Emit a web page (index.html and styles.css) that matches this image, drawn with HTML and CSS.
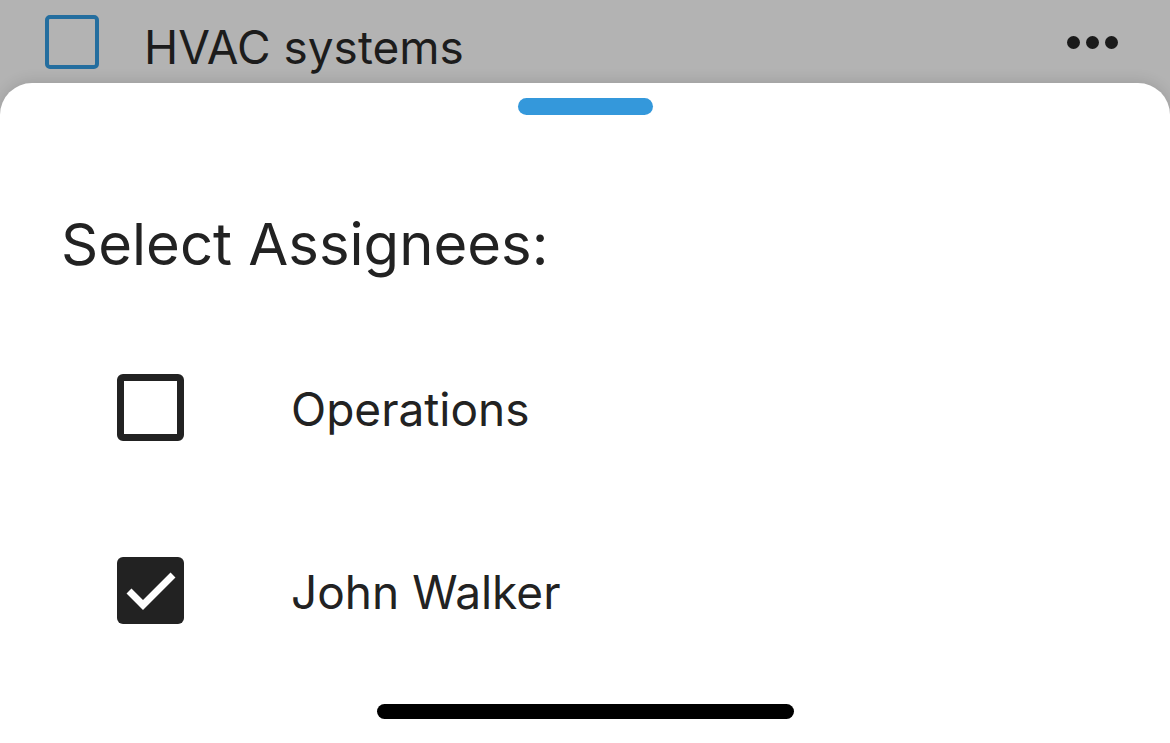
FILE: index.html
```html
<!DOCTYPE html>
<html lang="en">
<head>
<meta charset="utf-8">
<title>Select Assignees</title>
<link rel="stylesheet" href="styles.css">
</head>
<body>
<div class="screen">
  <header class="task-row">
    <span class="task-check"></span>
    <span class="task-title">HVAC systems</span>
    <span class="more" aria-label="More">
      <span class="dot"></span><span class="dot"></span><span class="dot"></span>
    </span>
  </header>
  <section class="sheet">
    <div class="handle"></div>
    <h1 class="sheet-title">Select Assignees:</h1>
    <ul class="options">
      <li class="option">
        <span class="box"></span>
        <span class="label">Operations</span>
      </li>
      <li class="option">
        <span class="box box-checked">
          <svg viewBox="0 0 67 67" width="67" height="67" aria-hidden="true">
            <polyline points="12,34 26,48 56,18" fill="none" stroke="#ffffff" stroke-width="7" stroke-linecap="butt" stroke-linejoin="miter"/>
          </svg>
        </span>
        <span class="label">John Walker</span>
      </li>
    </ul>
    <div class="home-indicator"></div>
  </section>
</div>
</body>
</html>
```
FILE: styles.css
```css
* { box-sizing: border-box; }
html, body {
  margin: 0;
  padding: 0;
  height: 100%;
}
body {
  background: #b3b3b3;
  font-family: Inter, "Noto Sans", "Liberation Sans", sans-serif;
  color: #222222;
  overflow: hidden;
}
.screen {
  width: 1170px;
  height: 743px;
  display: flex;
  flex-direction: column;
}
.task-row {
  height: 83px;
  flex: none;
  display: flex;
  align-items: flex-start;
  padding: 0 52px 0 45px;
}
.task-check {
  width: 54px;
  height: 54px;
  margin-top: 15px;
  border: 4px solid #246e9f;
  border-radius: 5px;
  flex: none;
}
.task-title {
  margin-left: 45px;
  margin-top: 20px;
  font-size: 46px;
  line-height: 54px;
  color: #1c1c1c;
}
.more {
  margin-left: auto;
  margin-top: 36px;
  display: flex;
  gap: 6px;
}
.dot {
  width: 13px;
  height: 13px;
  border-radius: 50%;
  background: #1a1a1a;
}
.sheet {
  flex: 1;
  background: #ffffff;
  border-radius: 32px 32px 0 0;
  box-shadow: 0 -2px 14px rgba(0, 0, 0, 0.12);
  display: flex;
  flex-direction: column;
  align-items: stretch;
}
.handle {
  width: 135px;
  height: 17px;
  border-radius: 9px;
  background: #3498db;
  margin: 15px auto 0;
}
.sheet-title {
  margin: 99px 0 0 61px;
  font-size: 58px;
  line-height: 60px;
  font-weight: 400;
  color: #222222;
}
.options {
  list-style: none;
  margin: 100px 0 0 117px;
  padding: 0;
  display: flex;
  flex-direction: column;
  gap: 116px;
}
.option {
  display: flex;
  align-items: center;
  height: 67px;
}
.box {
  width: 67px;
  height: 67px;
  border: 7px solid #222222;
  border-radius: 6px;
  flex: none;
}
.box-checked {
  border: none;
  background: #222222;
  display: flex;
}
.label {
  margin-left: 107px;
  font-size: 46px;
  line-height: 46px;
  color: #222222;
  padding-top: 2px;
}
.home-indicator {
  margin: auto auto 24px;
  width: 417px;
  height: 15px;
  border-radius: 8px;
  background: #000000;
}
```
